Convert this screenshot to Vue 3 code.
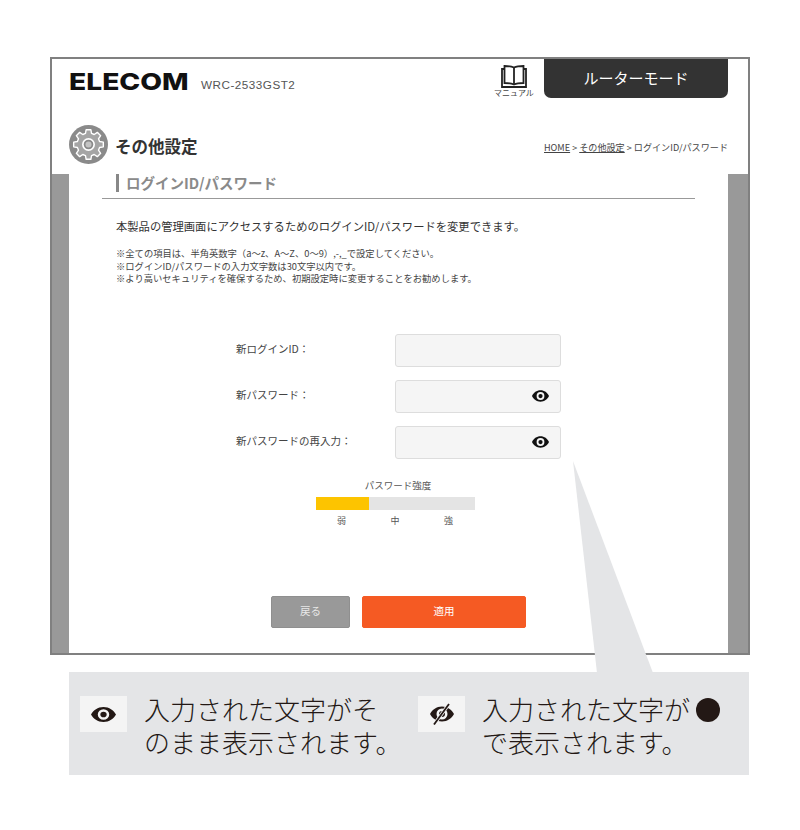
<template>
  <div class="page">
    <div class="frame">
      <header class="top">
        <div class="brand">
          <span class="logo">ELECOM</span>
          <span class="model">WRC-2533GST2</span>
        </div>
        <div class="manual">
          <svg width="26" height="23" viewBox="0 0 26 23" fill="none" stroke="#222" stroke-width="1.800">
            <path d="M13 2.500C10.500 1.300 7 1 3.500 1V18C7 18 10.500 18.300 13 19.500C15.500 18.300 19 18 22.500 18V1C19 1 15.500 1.300 13 2.500Z" />
            <path d="M13 2.500V19.500" />
            <path d="M3.500 4H1V22H25V4H22.500" />
          </svg>
          <span>マニュアル</span>
        </div>
        <div class="mode">ルーターモード</div>
      </header>

      <div class="title-row">
        <div class="gear">
          <svg width="39" height="39" viewBox="0 0 39 39">
            <circle cx="19.500" cy="19.500" r="19.500" fill="#8a8a8a" />
            <path :d="gearPath" fill="#a5a5a5" stroke="#fff" stroke-width="1.400" stroke-linejoin="round" />
            <circle cx="19.500" cy="19.500" r="6.500" fill="#fff" />
            <circle cx="19.500" cy="19.500" r="4.800" fill="#8a8a8a" />
            <circle cx="19.500" cy="19.500" r="3" fill="#c4c4c4" />
          </svg>
        </div>
        <h1>その他設定</h1>
        <nav class="crumbs"><u>HOME</u> &gt; <u>その他設定</u> &gt; ログインID/パスワード</nav>
      </div>

      <div class="body">
        <main class="content">
          <h2>ログインID/パスワード</h2>
          <p class="intro">本製品の管理画面にアクセスするためのログインID/パスワードを変更できます。</p>
          <ul class="notes">
            <li v-for="note in notes" :key="note">{{ note }}</li>
          </ul>

          <form class="form">
            <div v-for="row in rows" :key="row.label" class="row">
              <label>{{ row.label }}</label>
              <div class="field">
                <svg v-if="row.eye" width="17" height="12" viewBox="0 0 24 16" class="eye">
                  <path fill="#111" fill-rule="evenodd" d="M12 0C6.500 0 2.200 3.400 0 8c2.200 4.600 6.500 8 12 8s9.800-3.400 12-8C21.800 3.400 17.500 0 12 0ZM12 13.500A5.500 5.500 0 1 1 12 2.500a5.500 5.500 0 0 1 0 11Z" />
                  <circle cx="12" cy="8" r="3" fill="#111" />
                </svg>
              </div>
            </div>
          </form>

          <div class="strength">
            <div class="strength-label">パスワード強度</div>
            <div class="bar"><div class="bar-fill" :style="{ width: strength + '%' }"></div></div>
            <div class="levels"><span>弱</span><span>中</span><span>強</span></div>
          </div>

          <div class="buttons">
            <button type="button" class="back">戻る</button>
            <button type="button" class="apply">適用</button>
          </div>
        </main>
      </div>
    </div>

    <section class="legend">
      <div class="legend-item">
        <div class="icon-box">
          <svg width="25" height="15" viewBox="0 0 24 16" preserveAspectRatio="none">
            <path fill="#231815" fill-rule="evenodd" d="M12 0C6.500 0 2.200 3.400 0 8c2.200 4.600 6.500 8 12 8s9.800-3.400 12-8C21.800 3.400 17.500 0 12 0ZM12 13.500A5.500 5.500 0 1 1 12 2.500a5.500 5.500 0 0 1 0 11Z" />
            <circle cx="12" cy="8" r="3" fill="#231815" />
          </svg>
        </div>
        <p>入力された文字がそ<br>のまま表示されます。</p>
      </div>
      <div class="legend-item">
        <div class="icon-box">
          <svg width="24" height="22" viewBox="0 0 24 22">
            <path fill="#231815" fill-rule="evenodd" d="M12 3.500C6.500 3.500 2.200 6.900 0 11c2.200 4.100 6.500 7.500 12 7.500s9.800-3.400 12-7.500C21.800 6.900 17.500 3.500 12 3.500ZM12 16.500A5.500 5.500 0 1 1 12 5.500a5.500 5.500 0 0 1 0 11Z" />
            <circle cx="12" cy="11" r="3" fill="#231815" />
            <path d="M4 21.500L19 1" stroke="#f4f4f4" stroke-width="3.400" />
            <path d="M4 21.500L19 1" stroke="#231815" stroke-width="1.800" />
          </svg>
        </div>
        <p>入力された文字が<span class="dot"></span><br>で表示されます。</p>
      </div>
    </section>

    <svg class="wedge" width="800" height="830" viewBox="0 0 800 830">
      <polygon points="573,461 597,673 653,673" fill="#e4e5e7" />
    </svg>
  </div>
</template>

<script setup>
const strength = 33.3

// gear outline: 8 teeth around the centre of the 39px badge
function buildGear(teeth, outer, inner, cx, cy) {
  const step = (Math.PI * 2) / teeth
  const pts = []
  for (let i = 0; i < teeth; i++) {
    const a = i * step - Math.PI / 2
    const offs = [[-0.34, inner], [-0.2, outer], [0.2, outer], [0.34, inner]]
    for (const [o, r] of offs) {
      const t = a + o * step
      pts.push(`${(cx + Math.cos(t) * r).toFixed(2)} ${(cy + Math.sin(t) * r).toFixed(2)}`)
    }
  }
  return 'M' + pts.join('L') + 'Z'
}
const gearPath = buildGear(8, 15, 11.5, 19.5, 19.5)

const notes = [
  '※全ての項目は、半角英数字（a～z、A～Z、0～9）,-,_で設定してください。',
  '※ログインID/パスワードの入力文字数は30文字以内です。',
  '※より高いセキュリティを確保するため、初期設定時に変更することをお勧めします。',
]

const rows = [
  { label: '新ログインID：', eye: false },
  { label: '新パスワード：', eye: true },
  { label: '新パスワードの再入力：', eye: true },
]
</script>

<style>
html, body {
  margin: 0;
  background: #fff;
}
</style>

<style scoped>
.page {
  position: relative;
  width: 800px;
  height: 830px;
  padding: 57px 0 0 50px;
  box-sizing: border-box;
  overflow: hidden;
  background: #fff;
  font-family: "Noto Sans CJK JP", "Liberation Sans", sans-serif;
  color: #333;
}
.frame {
  width: 700px;
  height: 598px;
  box-sizing: border-box;
  border: 2px solid #808080;
  display: flex;
  flex-direction: column;
}
.top {
  display: flex;
  height: 59px;
  padding-left: 17px;
  padding-right: 20px;
}
.brand {
  display: flex;
  align-items: flex-start;
  flex: 1;
  padding-top: 8px;
}
.logo {
  font-family: "Inter", sans-serif;
  font-weight: 800;
  font-size: 23.500px;
  line-height: 30px;
  color: #111;
  width: 119px;
  display: inline-block;
  white-space: nowrap;
  transform: scaleX(1.2);
  transform-origin: left;
}
.model {
  margin: 11px 0 0 13px;
  font-family: "Liberation Sans", sans-serif;
  font-size: 11.700px;
  line-height: 14px;
  letter-spacing: 0.5px;
  color: #555;
}
.manual {
  width: 44px;
  margin-right: 8px;
  padding-top: 6px;
  display: flex;
  flex-direction: column;
  align-items: center;
  font-size: 8px;
  line-height: 10px;
  color: #444;
}
.manual svg {
  display: block;
}
.mode {
  width: 184px;
  height: 39px;
  box-sizing: border-box;
  background: #333;
  border-radius: 0 0 7px 7px;
  color: #fff;
  font-size: 15px;
  line-height: 38px;
  text-align: center;
}
.title-row {
  display: flex;
  align-items: center;
  height: 56px;
  padding: 0 20px 0 17px;
}
.gear {
  width: 39px;
  height: 39px;
  margin-right: 7px;
  margin-top: -3px;
}
.gear svg {
  display: block;
}
h1 {
  flex: 1;
  margin: 0;
  font-size: 16.500px;
  font-weight: 700;
  color: #333;
  line-height: 24px;
}
.crumbs {
  font-size: 9.100px;
  color: #444;
  padding-top: 2px;
  white-space: nowrap;
}
.body {
  flex: 1;
  background: #999;
  padding: 0 20px 0 17px;
  display: flex;
}
.content {
  flex: 1;
  background: #fff;
  padding: 0 33px 0 33px;
  display: flex;
  flex-direction: column;
}
h2 {
  margin: 0;
  padding: 0 0 6px 24px;
  border-bottom: 1px solid #999;
  font-size: 14.500px;
  line-height: 18px;
  font-weight: 700;
  color: #8a8a8a;
  position: relative;
}
h2::before {
  content: "";
  position: absolute;
  left: 14px;
  top: 0;
  width: 3px;
  height: 18px;
  background: #888;
}
.intro {
  margin: 19px 0 0 14px;
  font-size: 11.300px;
  line-height: 17px;
  color: #333;
  white-space: nowrap;
}
.notes {
  list-style: none;
  margin: 12px 0 0 14px;
  padding: 0;
  font-size: 9.300px;
  line-height: 12.500px;
  color: #444;
  white-space: nowrap;
}
.form {
  margin-top: 49px;
  display: flex;
  flex-direction: column;
  gap: 13px;
}
.row {
  display: flex;
  align-items: center;
  height: 33px;
}
.row label {
  width: 159px;
  margin-left: 134px;
  padding-bottom: 3px;
  font-size: 10.500px;
  color: #444;
  white-space: nowrap;
}
.field {
  width: 166px;
  height: 33px;
  box-sizing: border-box;
  background: #f5f5f5;
  border: 1px solid #ddd;
  border-radius: 3px;
  display: flex;
  align-items: center;
  justify-content: flex-end;
  padding-right: 11px;
}
.eye {
  display: block;
}
.strength {
  margin: 19px 0 0 214px;
  width: 159px;
}
.strength-label {
  text-align: center;
  font-size: 9.500px;
  line-height: 14px;
  color: #555;
  margin-left: 5px;
}
.bar {
  height: 13px;
  background: #e4e4e4;
  margin-top: 5px;
}
.bar-fill {
  height: 100%;
  background: #fdc400;
}
.levels {
  display: flex;
  justify-content: space-between;
  padding: 0 22px 0 21px;
  font-size: 9px;
  line-height: 12px;
  margin-top: 5px;
  color: #555;
}
.buttons {
  display: flex;
  gap: 12px;
  margin: 69px 0 0 169px;
}
button {
  height: 32px;
  border-radius: 2px;
  color: #fff;
  font-family: inherit;
  font-size: 10.500px;
  padding: 0 0 2px;
}
.back {
  width: 79px;
  background: #999;
  border: 1px solid #8f8f8f;
  color: #e8e8e8;
}
.apply {
  width: 164px;
  background: #f55a23;
  border: 1px solid #f55a23;
}
.legend {
  display: flex;
  width: 680px;
  height: 103px;
  margin: 17px 0 0 19px;
  background: #e4e5e7;
  box-sizing: border-box;
  padding: 24px 0 0 11px;
}
.legend-item {
  display: flex;
  flex: 0 0 338px;
}
.icon-box {
  width: 47px;
  height: 36px;
  background: #f4f4f4;
  display: flex;
  align-items: center;
  justify-content: center;
  flex-shrink: 0;
}
.legend-item p {
  margin: -4px 0 0 17px;
  font-size: 26px;
  line-height: 33px;
  font-weight: 300;
  color: #231815;
  white-space: nowrap;
}
.dot {
  display: inline-block;
  width: 24px;
  height: 24px;
  border-radius: 50%;
  background: #231815;
  vertical-align: -2px;
  margin-left: 6px;
}
.wedge {
  position: absolute;
  left: 0;
  top: 0;
  pointer-events: none;
}
</style>
